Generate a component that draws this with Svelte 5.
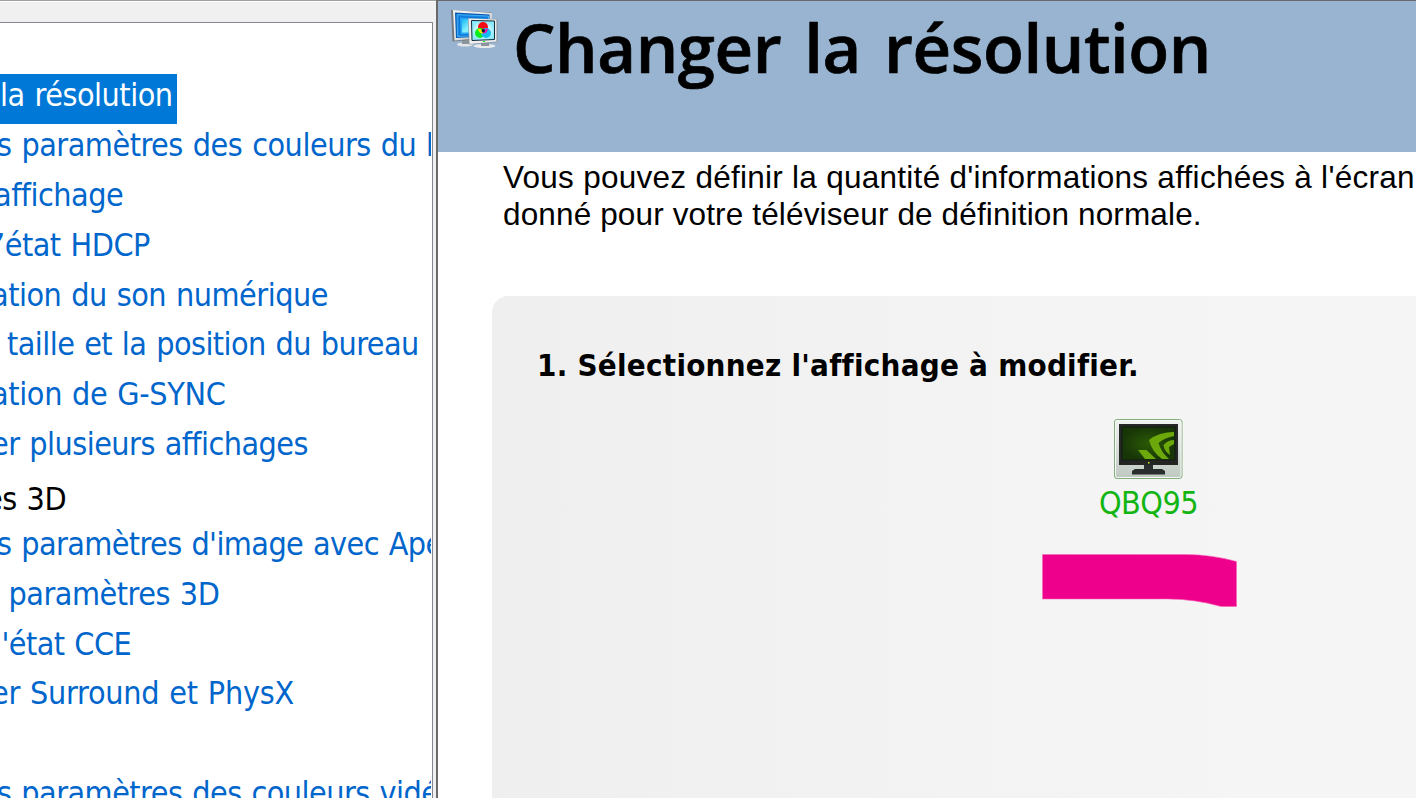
<script>
  const tasks = [
    { text: 'la résolution', x: 0, selected: true },
    { text: 's paramètres des couleurs du bureau', x: -3 },
    { text: 'affichage', x: -6 },
    { text: '’état HDCP', x: -4 },
    { text: 'ation du son numérique', x: -9 },
    { text: 'taille et la position du bureau', x: 7, spacing: -.55 },
    { text: 'ation de G-SYNC', x: -9, spacing: -.35 },
    { text: 'er plusieurs affichages', x: -9, spacing: -.53 },
    { text: 'es 3D', x: -15, group: true },
    { text: 's paramètres d\'image avec Aperçu', x: -3, spacing: -.58 },
    { text: 'paramètres 3D', x: 8.5 },
    { text: 'l\'état CCE', x: -6, spacing: -.55 },
    { text: 'er Surround et PhysX', x: -9, spacing: -.27 },
    { text: '', x: 0 },
    { text: 's paramètres des couleurs vidéo', x: -3, spacing: -.52 }
  ];
</script>

<div class="window">
  <aside>
    <nav>
      {#each tasks as task}
        <div class="row" class:selected={task.selected} class:group={task.group}>
          <span style="margin-left: {task.x}px; letter-spacing: {task.spacing ?? -.48}px">{task.text}</span>
        </div>
      {/each}
    </nav>
  </aside>
  <main>
    <header>
      <svg class="logo" width="48" height="42" viewBox="0 0 48 42">
        <defs>
          <linearGradient id="frame" x1="0" y1="0" x2="1" y2="1">
            <stop offset="0" stop-color="#f2f3f3" /><stop offset=".5" stop-color="#e4e6e8" /><stop offset="1" stop-color="#8d959b" />
          </linearGradient>
          <linearGradient id="sky" x1="0" y1="0" x2="1" y2=".6">
            <stop offset="0" stop-color="#18b8f6" /><stop offset=".5" stop-color="#8cf4ff" /><stop offset="1" stop-color="#28bfff" />
          </linearGradient>
          <radialGradient id="glow"><stop offset=".3" stop-color="#fff" /><stop offset="1" stop-color="#8be9fb" /></radialGradient>
        </defs>
        <ellipse cx="14" cy="35.500" rx="8" ry="2" fill="#e3e6e8" />
        <path d="M11 31h7v4h-7z" fill="#8c959b" />
        <path d="M0 1 41 3.500V29L1.500 32.500Z" fill="#737b80" />
        <path d="M2 1 41 4V28L3.500 31.500Z" fill="url(#frame)" />
        <path d="M4 3.500 38.500 5.500V27L5 29Z" fill="#0758b0" />
        <path d="M6 5.500 37.500 7V26L6.500 27.500Z" fill="#1688e8" stroke="#50bfff" stroke-width=".8" />
        <path d="M8.500 8 36 9V25L9 26Z" fill="#27a8f6" stroke="#0864c7" stroke-width=".8" />
        <path d="M11 10.500H34V23.500H11Z" fill="url(#sky)" />
        <ellipse cx="33.500" cy="37" rx="11" ry="2" fill="#e8eaeb" />
        <path d="M30 33h8v4h-8z" fill="#8c959b" />
        <path d="M17 9.500 46.500 10V33L18 35.500Z" fill="#858e94" />
        <path d="M17.500 9.500 45.500 10.500V32.500L18.500 35Z" fill="#eceeef" />
        <path d="M20.500 11.500 43.500 12V30.500L21 31.500Z" fill="url(#glow)" stroke="#142b38" />
        <circle cx="32" cy="18" r="5" fill="#f20c16" />
        <circle cx="29" cy="24" r="5" fill="#08ed21" />
        <circle cx="35" cy="24" r="5" fill="#13bdf0" />
        <path d="M27 20Q31 19 32.500 24.500Q28 25 27 20" fill="#f4e900" />
        <path d="M37 20Q33 19 31.500 24.500Q36 25 37 20" fill="#eb16b5" />
        <circle cx="32.300" cy="21.700" r="1.700" fill="#061b38" />
        <path d="M32 32h2v1h-2z" fill="#18ef21" />
      </svg>
      <h1>Changer la résolution</h1>
    </header>
    <p class="intro"><span class="first">Vous pouvez définir la quantité d'informations affichées à l'écran</span><br /><span>donné pour votre téléviseur de définition normale.</span></p>
    <section>
      <h2>1. Sélectionnez l'affichage à modifier.</h2>
      <div class="display">
        <svg width="70" height="61" viewBox="0 0 70 61">
          <defs>
            <linearGradient id="plate" x1="0" y1="0" x2="0" y2="1"><stop offset="0" stop-color="#f1f3f1" /><stop offset="1" stop-color="#bdc9c0" /></linearGradient>
            <radialGradient id="screen"><stop offset="0" stop-color="#2b5a05" /><stop offset="1" stop-color="#183608" /></radialGradient>
          </defs>
          <rect x=".5" y=".5" width="67.500" height="59" rx="2.500" fill="url(#plate)" stroke="#83ae7b" />
          <rect x="1.5" y="1.500" width="65.500" height="57" rx="2" fill="none" stroke="#f5f8f5" />
          <rect x="5" y="5" width="59" height="41" fill="#252826" />
          <rect x="8" y="8" width="53" height="33" fill="url(#screen)" stroke="#101b10" />
          <path d="M24 31H32.500L42 40H31ZM35 21Q45 13 60 13V17Q50 19 44.500 24Q47 33 55 40H48Q38 33 35 21ZM49.500 26Q54 21 60 21V25L55 28L56 36Q50 32 49.500 26Z" fill="#6ca80a" />
          <path d="M6 41.500h57v4H6z" fill="#222522" />
          <path d="M34 43h1.500v1.500h-1.500z" fill="#c8f528" />
          <path d="M30 46h9v4h9l3 2v3.500H18V52l3-2h9z" fill="#292d2e" />
        </svg>
        <span>QBQ95</span>
        <svg class="mark" width="195" height="54" viewBox="0 0 195 54">
          <path d="M.500 .500H145C162 .700 178 3 194.500 7.500V52.500H179Q153 45 126 45H.500Z" fill="#ef008c" stroke="#f56cb5" stroke-width=".6" />
        </svg>
      </div>
    </section>
  </main>
</div>

<style>
  :global(body) { overflow: hidden; }
  * { box-sizing: border-box; }
  .window { display: grid; grid-template-columns: 436px 980px; width: 1416px; height: 798px; overflow: hidden; background: #f0f0f0; }
  aside { min-width: 0; border-top: 1px solid #a0a0a0; box-shadow: inset 0 1px #fff; padding: 21px 3px 0 0; height: 798px; }
  nav { height: 777px; overflow: hidden; border: solid #828790; border-width: 1px 1px 0 0; background: #fff; padding: 51px 1px 0 0; font: 32px/43px "DejaVu Sans Condensed", "DejaVu Sans", sans-serif; font-stretch: condensed; font-variant-ligatures: none; }
  .row { height: 49.87px; color: #0066cc; white-space: pre; overflow: hidden; word-spacing: 1.200px; }
  .selected { width: 177px; height: 50px; color: #fff; background: #0078d7; }
  .group { color: #000; line-height: 53px; }
  main { min-width: 0; border: solid #696969; border-width: 1px 0 0 2px; background: #fff; height: 798px; }
  header { display: flex; height: 151px; background: #99b4d1; }
  .logo { margin: 8px 0 0 13px; flex: none; overflow: visible; }
  h1 { margin: 4px 0 0 14px; font: 600 67px/84px "Open Sans", sans-serif; white-space: nowrap; letter-spacing: -.4px; word-spacing: 6px; -webkit-text-stroke: .7px #000; }
  .intro { margin: 7px 0 0 65px; height: 113px; font: 31.5px/37px "Liberation Sans", Arial, sans-serif; font-variant-ligatures: none; white-space: nowrap; letter-spacing: .14px; }
  .first { letter-spacing: .27px; }
  section { margin: 24px 0 0 54px; height: 502px; border-radius: 16px 0 0; background: linear-gradient(90deg, #efefef, #f5f5f5 80%); padding: 48px 0 0 45px; }
  h2 { margin: 0; font: 700 31px/42px "DejaVu Sans Condensed", "DejaVu Sans", sans-serif; font-stretch: condensed; font-variant-ligatures: none; white-space: nowrap; letter-spacing: .26px; }
  .display { display: flex; flex-direction: column; align-items: center; width: 195px; margin: 33px 0 0 505px; }
  .display span { margin-left: 18px; color: #12b512; font: 32px/44px "DejaVu Sans Condensed", "DejaVu Sans", sans-serif; font-stretch: condensed; letter-spacing: -.5px; padding-top: 1px; }
  .display svg:first-child { margin-left: 18px; flex: none; }
  .mark { margin-top: 29px; flex: none; }
</style>
